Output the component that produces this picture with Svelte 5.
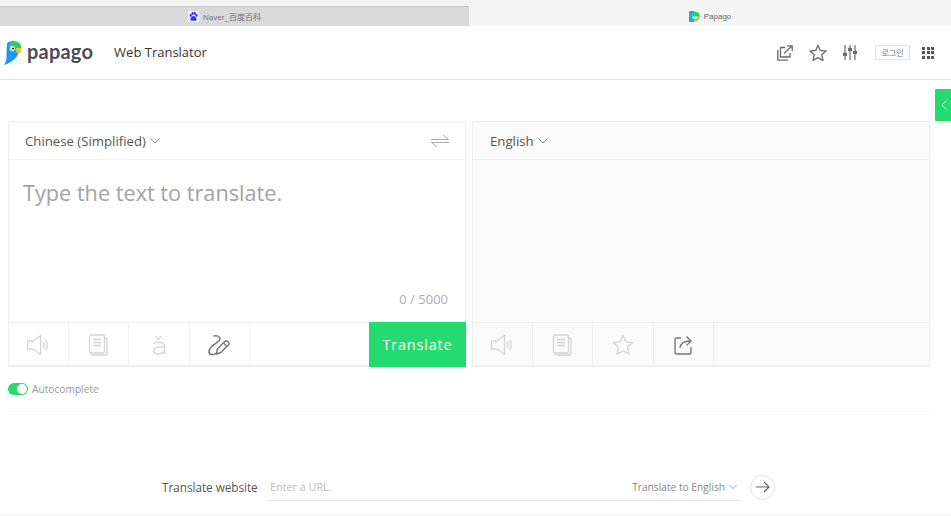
<script>
  const leftTools = ["speaker", "book", "pinyin", "handwrite"];
  const rightTools = ["speaker", "book", "star", "share"];
</script>

{#snippet icon(name, active)}
  <svg class="tool-icon" class:active width="24" height="24" viewBox="0 0 24 24" fill="none" stroke="currentColor" stroke-width="1.300" aria-hidden="true">
    {#if name === "speaker"}
      <path d="M1.500 8h5.500l7.500-5.500v19L7 16H1.500z" stroke-linejoin="round" />
      <path d="M17 9c1.400 1.800 1.400 4.200 0 6M19.500 7c2.300 3 2.300 7 0 10" />
    {:else if name === "book"}
      <rect x="3.500" y="2" width="15" height="18" rx="2" />
      <path d="M18.500 5h1a1.500 1.500 0 0 1 1.500 1.500V20a2 2 0 0 1-2 2H7a2 2 0 0 1-2-1.500" />
      <path d="M7 6.500h8M7 9.500h8M7 12.500h8" />
    {:else if name === "pinyin"}
      <path d="M8.500 3l3 3.500 3-3.500" />
      <path d="M6.500 11c2-2.500 11-3 11 2.500V20.500h1M17.500 14c-13-1.500-13.500 7-7 7 3 0 5.500-1 7-3" />
    {:else if name === "handwrite"}
      <path d="M7 3c3-1 6 .5 6 3 0 3-10 6-11 12-.5 4 5 4.500 7.500 2" stroke-width="1.500" stroke-linecap="round" />
      <path d="M9.500 21l.8-5 8-8c1.200-1.200 4.700 2 3.500 3.500l-8 8z" stroke-linejoin="round" stroke-width="1.500" />
      <path d="M16.500 10l3.500 3.500" stroke-width="1.300" />
    {:else if name === "star"}
      <path d="M12 2.500l2.900 6.300 6.900.8-5.100 4.700 1.400 6.800-6.100-3.400-6.100 3.400 1.400-6.800-5.100-4.700 6.900-.8z" stroke-linejoin="round" />
    {:else if name === "share"}
      <path d="M10 5H6a2 2 0 0 0-2 2v12a2 2 0 0 0 2 2h12a2 2 0 0 0 2-2v-5" stroke-width="1.400" />
      <path d="M9 15c.5-4 3.500-7 10-7M15.500 3.500L20 8l-4.500 4.500" stroke-width="1.400" />
    {/if}
  </svg>
{/snippet}

{#snippet chevron()}
  <svg class="chevron" width="10" height="6" viewBox="0 0 10 6" fill="none" stroke="currentColor" aria-hidden="true"><path d="M.5.5L5 5 9.500.5" /></svg>
{/snippet}

<div class="page">
  <div class="tabs">
    <div class="tab inactive">
      <svg width="11" height="11" viewBox="0 0 12 12" aria-hidden="true">
        <rect width="12" height="12" rx="1.500" fill="#f1f1fa" />
        <g fill="#3a3ad0">
          <ellipse cx="3" cy="5" rx="1.200" ry="1.600" />
          <ellipse cx="5" cy="2.800" rx="1.200" ry="1.600" />
          <ellipse cx="7.500" cy="2.800" rx="1.200" ry="1.600" />
          <ellipse cx="9.300" cy="5" rx="1.200" ry="1.600" />
          <path d="M6 5.500c-1.500 0-3.500 2-3.500 3.800 0 1.700 2 1.500 3.500 1.200 1.500.3 3.500.5 3.500-1.200C9.500 7.500 7.500 5.500 6 5.500z" />
        </g>
      </svg>
      <span class="tab-title">Naver_百度百科</span>
    </div>
    <div class="tab current">
      <svg width="11" height="11" viewBox="0 0 12 12" aria-hidden="true">
        <path d="M1.500 0H6v12H0V1.500A1.500 1.500 0 0 1 1.500 0z" fill="#2d9cf5" />
        <circle cx="7" cy="5.500" r="4.800" fill="#27d16f" />
        <path d="M3.500 6h7c-.5 1.500-2 3-3.500 3S4 8 3.500 6z" fill="#e8f8ee" />
        <circle cx="8" cy="9.800" r="1.800" fill="#fbb03b" />
      </svg>
      <span class="tab-title">Papago</span>
    </div>
  </div>

  <header class="topbar">
    <div class="brand">
      <svg class="parrot" width="18" height="24" viewBox="0 0 18 24" aria-hidden="true">
        <path d="M3.500 1.500C5 .5 8 0 10 0v12c0 6-4 10-10 12 2-3 2.500-5.500 2.500-9.500 0-5 0-9.500 1-13z" fill="#1e96f3" />
        <path d="M7 9h8c0 5-4 11-13 14 3-3 4-6 4-9z" fill="#1e96f3" />
        <path d="M6 1c2-1 6-1 8 0 2 1 3.500 3 3.500 6.500H12v2.500c-2 1.500-6 1.500-7-1.500C4.500 6 5 3 6 1z" fill="#24d16c" />
        <path d="M12 7.500h5.500c0 3-1 5-3 5.500-2-.5-2.500-3-2.500-5.500z" fill="#fcc419" />
        <circle cx="8.500" cy="7.500" r="2.400" fill="#fff" />
        <circle cx="9" cy="7.500" r="1.100" fill="#333" />
      </svg>
      <span class="wordmark">papago</span>
      <span class="subtitle">Web Translator</span>
    </div>
    <div class="actions">
      <svg width="16" height="16" viewBox="0 0 16 16" fill="none" stroke="currentColor" stroke-width="1.300" aria-hidden="true">
        <path d="M8 2.500H3.500V12H13V8" />
        <path d="M.8 5v10.200H11" />
        <path d="M7 8.500L15 .8M10 .8H15.200V6" />
      </svg>
      <svg width="18" height="18" viewBox="0 0 18 18" fill="none" stroke="currentColor" stroke-width="1.300" aria-hidden="true">
        <path d="M9 1.200l2.300 5.200 5.700.6-4.200 3.800 1.200 5.600L9 13.600l-5 2.800 1.200-5.600L1 7l5.700-.6z" stroke-linejoin="round" />
      </svg>
      <svg width="14" height="15" viewBox="0 0 14 15" fill="none" stroke="currentColor" stroke-width="1.200" aria-hidden="true">
        <path d="M2 0v15M7 0v15M12 0v15" />
        <g fill="currentColor"><rect x=".500" y="8.500" width="3" height="2" /><rect x="5.500" y="3.500" width="3" height="2" /><rect x="10.500" y="6.500" width="3" height="2" /></g>
      </svg>
      <span class="login">로그인</span>
      <div class="apps">
        {#each Array(9) as _}<i></i>{/each}
      </div>
    </div>
  </header>

  <button class="side-tab" aria-label="Open side panel">
    <svg width="6" height="10" viewBox="0 0 6 10" fill="none" stroke="#fff" aria-hidden="true"><path d="M5.500.5L1 5l4.500 4.500" /></svg>
  </button>

  <main class="content">
    <div class="panels">
      <section class="panel">
        <div class="panel-head">
          <span class="lang">Chinese (Simplified) {@render chevron()}</span>
          <svg class="swap" width="18" height="14" viewBox="0 0 18 14" fill="none" stroke="currentColor" aria-hidden="true">
            <path d="M0 5.500h17.500L12 1M18 8.500H.5L6 13" />
          </svg>
        </div>
        <div class="panel-body">
          <p class="placeholder">Type the text to translate.</p>
          <span class="count">0 / 5000</span>
        </div>
        <div class="panel-tools">
          {#each leftTools as tool}
            <span class="tool">{@render icon(tool, tool === "handwrite")}</span>
          {/each}
          <button class="translate">Translate</button>
        </div>
      </section>

      <section class="panel result">
        <div class="panel-head">
          <span class="lang">English {@render chevron()}</span>
        </div>
        <div class="panel-body"></div>
        <div class="panel-tools">
          {#each rightTools as tool}
            <span class="tool">{@render icon(tool, tool === "share")}</span>
          {/each}
        </div>
      </section>
    </div>

    <div class="autocomplete">
      <span class="toggle"></span>
      <span>Autocomplete</span>
    </div>

    <div class="website">
      <span class="website-label">Translate website</span>
      <div class="url-field">
        <span class="url-placeholder">Enter a URL.</span>
        <span class="url-target">Translate to English {@render chevron()}</span>
      </div>
      <span class="go">
        <svg width="14" height="12" viewBox="0 0 14 12" fill="none" stroke="currentColor" stroke-width="1.200" aria-hidden="true"><path d="M0 6h13M8 1l5 5-5 5" /></svg>
      </span>
    </div>
  </main>
</div>

<style>
  :global(body) {
    margin: 0;
    background: #fff;
  }

  .page {
    position: relative;
    width: 951px;
    height: 516px;
    overflow: hidden;
    font-family: "Open Sans", "Noto Sans CJK KR", sans-serif;
    background: linear-gradient(#fff 510px, #f6f6f6);
  }

  .tabs {
    display: flex;
    height: 26px;
    background: #f5f5f5;
  }

  .tab {
    flex: 1;
    box-sizing: border-box;
    height: 20px;
    margin-top: 6px;
    display: flex;
    align-items: center;
    justify-content: center;
    gap: 4px;
    font-size: 8px;
    color: #666;
    font-family: "Liberation Sans", "Noto Sans CJK SC", sans-serif;
  }

  .tab.inactive {
    flex: 0 0 469px;
    padding-right: 20px;
    background: #d9d9d9;
    border-top: 1px solid #c6c6c6;
    color: #777;
  }

  .topbar {
    height: 54px;
    box-sizing: border-box;
    border-bottom: 1px solid #e2e2e2;
    display: flex;
    align-items: center;
    justify-content: space-between;
    padding: 0 17px 0 4px;
  }

  .brand {
    display: flex;
    align-items: center;
  }

  .wordmark {
    margin-left: 5px;
    font-family: "Lato", sans-serif;
    font-weight: 700;
    font-size: 20px;
    letter-spacing: 0.2px;
    color: #4a4c58;
    position: relative;
    top: -2px;
  }

  .subtitle {
    margin-left: 21px;
    font-size: 13px;
    color: #333;
    position: relative;
    top: -1px;
  }

  .actions {
    display: flex;
    align-items: center;
    color: #6a6a6a;
    gap: 16px;
  }

  .login {
    margin-left: 2px;
    width: 35px;
    height: 15px;
    box-sizing: border-box;
    border: 1px solid #e4e4e4;
    font-size: 8px;
    line-height: 13px;
    text-align: center;
    color: #777;
  }

  .apps {
    margin-left: -4px;
    display: grid;
    grid-template-columns: repeat(3, 3px);
    gap: 1.500px;
  }

  .apps i {
    width: 3px;
    height: 3px;
    background: #555;
  }

  .side-tab {
    position: absolute;
    top: 89px;
    right: 0;
    width: 16px;
    height: 32px;
    padding: 0 0 0 2px;
    border: none;
    border-radius: 1px 0 0 1px;
    background: #23db6f;
    display: flex;
    align-items: center;
    justify-content: center;
  }

  .content {
    padding: 41px 21px 0 8px;
  }

  .panels {
    display: flex;
    gap: 6px;
  }

  .panel {
    flex: 1;
    height: 246px;
    box-sizing: border-box;
    border: 1px solid #ededed;
    border-bottom-width: 2px;
    display: flex;
    flex-direction: column;
  }

  .panel.result {
    background: #fbfbfb;
  }

  .panel-head {
    height: 38px;
    flex: none;
    box-sizing: border-box;
    border-bottom: 1px solid #f3f3f3;
    display: flex;
    align-items: center;
    justify-content: space-between;
    padding: 0 16px;
  }

  .result .panel-head {
    padding-left: 17px;
  }

  .lang {
    font-size: 13.200px;
    color: #555;
    display: flex;
    align-items: center;
    gap: 4px;
  }

  .chevron {
    color: #888;
  }

  .swap {
    color: #aaa;
  }

  .panel-body {
    flex: 1;
    position: relative;
    padding: 19px 14px 0;
  }

  .placeholder {
    margin: 0;
    font-size: 21.700px;
    line-height: 28px;
    color: #a3a3a3;
  }

  .count {
    position: absolute;
    right: 17px;
    bottom: 14px;
    font-size: 13px;
    color: #aeaeae;
  }

  .panel-tools {
    height: 43px;
    flex: none;
    box-sizing: border-box;
    border-top: 1px solid #f0f0f0;
    display: flex;
    margin-left: -1px;
  }

  .tool {
    width: 60.500px;
    box-sizing: border-box;
    border-right: 1px solid #f0f0f0;
    display: flex;
    align-items: center;
    justify-content: center;
    color: #d4d4d4;
    padding-top: 1px;
  }

  .tool-icon.active {
    color: #777;
  }

  .translate {
    margin: -1px -1px -2px auto;
    width: 97px;
    border: none;
    background: #23db6f;
    color: #fff;
    font-family: inherit;
    font-size: 14.500px;
    font-weight: 500;
    letter-spacing: 0.8px;
  }

  .autocomplete {
    height: 45px;
    box-sizing: border-box;
    border-bottom: 1px solid #f4f4f4;
    display: flex;
    align-items: center;
    gap: 4px;
    font-size: 10.200px;
    color: #999;
  }

  .toggle {
    position: relative;
    width: 20px;
    height: 12px;
    border-radius: 6px;
    background: #23db6f;
  }

  .toggle::after {
    content: "";
    position: absolute;
    top: 1px;
    right: 1px;
    width: 10px;
    height: 10px;
    border-radius: 50%;
    background: #fff;
  }

  .website {
    margin-top: 61px;
    display: flex;
    align-items: center;
    padding-left: 154px;
  }

  .website-label {
    width: 105px;
    font-size: 11.700px;
    color: #555;
  }

  .url-field {
    width: 473px;
    height: 28px;
    box-sizing: border-box;
    border-bottom: 1px solid #e6e6e6;
    display: flex;
    align-items: center;
    justify-content: space-between;
    padding: 0 3px;
    font-size: 10.200px;
    color: #888;
  }

  .url-placeholder {
    font-size: 10.800px;
    color: #bbb;
  }

  .url-target {
    display: flex;
    align-items: center;
    gap: 4px;
  }

  .url-target .chevron {
    width: 8px;
  }

  .go {
    margin-left: 10px;
    width: 25px;
    height: 25px;
    box-sizing: border-box;
    border: 1px solid #e2e2e2;
    border-radius: 50%;
    display: flex;
    align-items: center;
    justify-content: center;
    color: #666;
  }
</style>
